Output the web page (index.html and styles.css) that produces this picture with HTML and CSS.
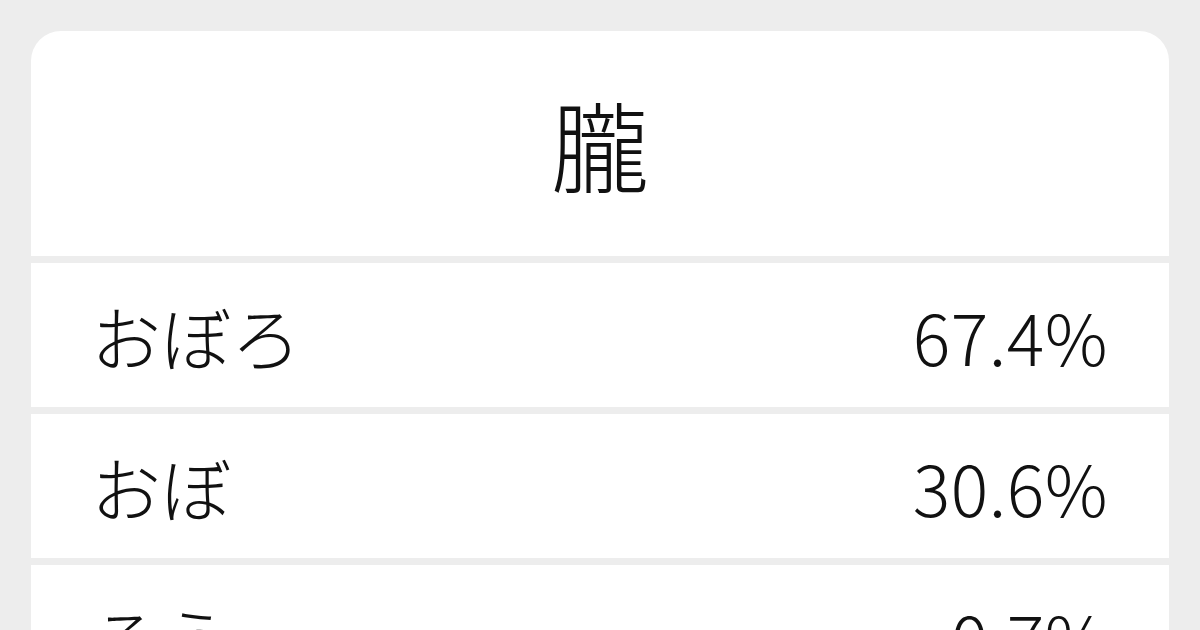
FILE: index.html
```html
<!DOCTYPE html>
<html lang="ja">
<head>
<meta charset="utf-8">
<link rel="stylesheet" href="styles.css">
</head>
<body>
<main class="card">
  <header class="head">朧</header>
  <div class="row"><span class="yomi">おぼろ</span><span class="pct">67.4%</span></div>
  <div class="row"><span class="yomi">おぼ</span><span class="pct">30.6%</span></div>
  <div class="row"><span class="yomi">ろう</span><span class="pct">0.7%</span></div>
</main>
</body>
</html>
```

FILE: styles.css
```css
html, body {
  margin: 0;
  height: 630px;
  overflow: hidden;
  background: #ededed;
}
body {
  padding: 31px 31px 0;
  box-sizing: border-box;
  font-family: "Noto Sans CJK JP", "Noto Sans", sans-serif;
  color: #111;
}
.card {
  display: flex;
  flex-direction: column;
  gap: 7px;
}
.head {
  background: #fff;
  border-radius: 30px 30px 0 0;
  height: 225px;
  display: flex;
  align-items: center;
  justify-content: center;
  font-size: 98px;
  font-weight: 300;
  padding-bottom: 3px;
  box-sizing: border-box;
}
.row {
  background: #fff;
  height: 144px;
  display: flex;
  align-items: center;
  justify-content: space-between;
  padding: 0 61px 0 60px;
  font-size: 70px;
  font-weight: 300;
  flex-shrink: 0;
}
.pct {
  letter-spacing: 0.5px;
}
```
